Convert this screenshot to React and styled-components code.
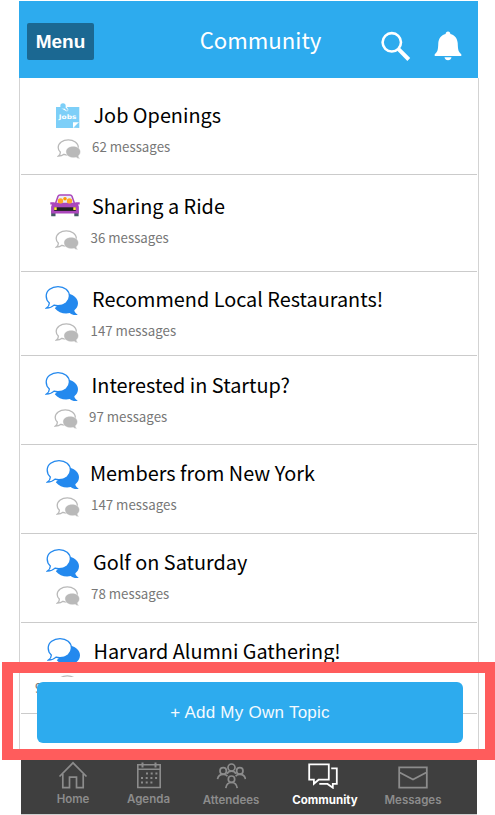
import styled, { createGlobalStyle } from "styled-components";

const App = () => {
    return (
        <PAGE>
            <GlobalStyle />
            <PHONE>
                <HEADER>
                    <MENU_BUTTON>Menu</MENU_BUTTON>
                    <HEADER_TITLE>Community</HEADER_TITLE>
                    <HEADER_ACTIONS>
                        <SearchIcon />
                        <BellIcon />
                    </HEADER_ACTIONS>
                </HEADER>
                <TOPIC_LIST>
                    {topics.map((topic) => (
                        <Topic key={topic.title} {...topic} />
                    ))}
                </TOPIC_LIST>
                <TAB_BAR>
                    {tabs.map(({ label, width, Icon, active, drop }) => (
                        <TAB key={label} $width={width} $active={active}>
                            <TAB_ICON $active={active}><Icon /></TAB_ICON>
                            <TAB_LABEL $drop={drop}>{label}</TAB_LABEL>
                        </TAB>
                    ))}
                </TAB_BAR>
            </PHONE>
            <HIGHLIGHT>
                <ADD_BUTTON>+ Add My Own Topic</ADD_BUTTON>
            </HIGHLIGHT>
        </PAGE>
    )
}

export default App;

const Topic = ({ title, messages, height, top, icon, iconX, bubbleX, titleX, messageX, cut }) => (
    <TOPIC_ROW $height={height} $top={top}>
        <TITLE_LINE>
            <ICON_SLOT $x={iconX}>
                {icon === "jobs" && <JobsIcon />}
                {icon === "car" && <CarIcon />}
                {icon === "chat" && <ChatIcon />}
            </ICON_SLOT>
            <TOPIC_TITLE $x={titleX}>{title}</TOPIC_TITLE>
        </TITLE_LINE>
        <MESSAGE_LINE $cut={cut}>
            <ICON_SLOT $x={bubbleX}><SmallChatIcon /></ICON_SLOT>
            {messages && <MESSAGE_COUNT $x={messageX}>{messages} messages</MESSAGE_COUNT>}
        </MESSAGE_LINE>
        {cut && <HIDDEN_COUNT>97 messages</HIDDEN_COUNT>}
    </TOPIC_ROW>
)

/* icons */

const SearchIcon = () => (
    <svg width="30" height="31" viewBox="0 0 30 31" fill="none" stroke="#fff">
        <circle cx="10.8" cy="11.3" r="9.2" strokeWidth="2.6" />
        <path d="M17.5 18.2 L27.8 28.5" strokeWidth="4" />
    </svg>
)

const BellIcon = () => (
    <svg width="28" height="30" viewBox="0 0 28 30" fill="#fff">
        <path d="M14 0.5c1.4 0 2.4 1 2.4 2.4 4.6 1.2 7 4.4 7.3 9.2.3 6.600.4 8.800 3.600 11.200v1.800H.7v-1.800c3.200-2.400 3.300-4.600 3.600-11.200.3-4.800 2.700-8 7.300-9.200C11.600 1.500 12.600.5 14 .5z" />
        <path d="M10.500 26.300h7c-.4 1.800-1.600 2.900-3.500 2.900s-3.100-1.100-3.500-2.900z" />
    </svg>
)

const JobsIcon = () => (
    <svg width="24" height="26" viewBox="0 0 24 26">
        <path d="M0 4h23.300v14.500L17 25H0z" fill="#7dcff8" />
        <path d="M17 25v-5.800h6z" fill="#fff" />
        <path d="M17.600 24.700L23.300 18.700V25z" fill="#7dcff8" />
        <path d="M5.500 5.500l4.500-3 2.500 4.500-1.500 1.500z" fill="#fff" />
        <circle cx="7" cy="3" r="2.700" fill="#7dcff8" />
        <path d="M8.500 4.500l3 3" stroke="#7dcff8" strokeWidth="1.600" />
        <text x="11.600" y="16" textAnchor="middle" textLength="17.500" lengthAdjust="spacingAndGlyphs" fontFamily="DejaVu Sans, sans-serif" fontSize="6.200" fontWeight="bold" fill="#fff">Jobs</text>
    </svg>
)

const CarIcon = () => (
    <svg width="30" height="26" viewBox="0 0 30 26">
        <path d="M1.200 17h4.300v5.300H1.200zM24.300 17h4.300v5.300h-4.300z" fill="#455a64" />
        <path d="M5.500 9.500L8 2.300Q8.500 1 10 1h10q1.500 0 2 1.300l2.500 7.200z" fill="#e8eefa" stroke="#ab47bc" strokeWidth="1.500" />
        <circle cx="10.500" cy="7" r="2.700" fill="#ffa726" />
        <circle cx="19.500" cy="7" r="2.700" fill="#ffa726" />
        <circle cx="15" cy="4.800" r="1.800" fill="#ff9800" />
        <path d="M.3 8.300h4.200l1 1.400h19l1-1.400h4.200v2.200h-1.600l.8 2.200V19.500H1.100v-6.800l.8-2.200H.3z" fill="#ab47bc" />
        <path d="M4.200 13.300h21.600v3.600H4.200z" fill="#212121" />
        <path d="M4.200 13.300h2.500v2.600H4.200zM23.300 13.300h2.500v2.600h-2.500z" fill="#ffeb3b" />
    </svg>
)

const ChatIcon = () => (
    <svg width="34" height="31" viewBox="0 0 34 31">
        <path d="M23.500 8.500C29 10 33 13.500 33 18.200c0 3-1.400 5.300-3.700 7 .3 2 1.500 3.300 3.500 4.600-3 .6-5.800.2-8-1.800-5.500 1.200-11.500-.3-15-4.800z" fill="#2489ee" />
        <path d="M13 1.600c6.500 0 11.400 4 11.400 9.500S19.500 20.600 13 20.600c-1.400 0-2.700-.1-3.900-.5-1.800 1.800-4.300 2.900-7.700 2.900 2.100-1.400 3-3 2.900-5.100C2.200 16.200 1.200 13.800 1.200 11.100 1.200 5.600 6.500 1.600 13 1.600z" fill="#fff" stroke="#2489ee" strokeWidth="1.300" />
    </svg>
)

const SmallChatIcon = () => (
    <svg width="24" height="20" viewBox="0 0 24 20">
        <path d="M11.300.8c5.400 0 10 3.100 10 7.700 0 4.400-4.500 7.500-10 7.500-1.600 0-3-.2-4.300-.7-1.500 1.200-3.300 1.800-5.600 1.800 1.500-1 2-2.400 1.900-4C1.900 11.800 1.200 10.300 1.200 8.500 1.200 3.900 5.900.8 11.300.8z" fill="#fff" stroke="#b9b9b9" strokeWidth="1.300" />
        <path d="M16.300 7.200c4 0 7.200 2.300 7.200 5.600 0 1.600-.7 3-1.900 4 0 1.200.5 2.200 1.500 3-1.700 0-2.900-.4-3.900-1.300-.9.200-1.800.3-2.800.3-4.200 0-7.500-2.500-7.500-6S12.200 7.200 16.300 7.200z" fill="#b9b9b9" stroke="#fff" strokeWidth=".5" />
    </svg>
)

const HomeIcon = () => (
    <svg width="30" height="28" viewBox="0 0 30 28" fill="none" stroke="currentColor" strokeWidth="1.700">
        <path d="M1.500 15.500L15 1.800l13.500 13.700M4.800 13v13.600h6.700V16.200h7v10.400h6.700V13" />
    </svg>
)

const AgendaIcon = () => (
    <svg width="26" height="28" viewBox="0 0 26 28" fill="none" stroke="currentColor">
        <path d="M1.800 3.800h22.400v22.700H1.800zM1.800 8.300h22.400" strokeWidth="1.600" />
        <path d="M6.500 1.500v5M19.500 1.500v5" strokeWidth="2" />
        <path d="M10 12.500h12M5 17h17M5 21.500h12" strokeWidth="2" strokeDasharray="2 2.700" />
    </svg>
)

const AttendeesIcon = () => (
    <svg width="30" height="28" viewBox="0 0 30 28" fill="none" stroke="currentColor" strokeWidth="1.700">
        <circle cx="15.500" cy="6.500" r="3.500" />
        <circle cx="7.200" cy="9.900" r="3.200" />
        <circle cx="23.800" cy="9.900" r="3.200" />
        <circle cx="15.500" cy="18.200" r="3.200" />
        <path d="M1.500 18.100c.6-3 2.600-4.700 5.700-4.700 2 0 3.300.6 4.200 1.800M11 12.800c1-1.800 2.500-2.600 4.500-2.600s3.500.8 4.500 2.600M29.500 18.100c-.6-3-2.600-4.700-5.700-4.700-2 0-3.300.6-4.200 1.800M9.800 27.200c.5-3.700 2.500-5.700 5.700-5.700s5.200 2 5.700 5.700" />
    </svg>
)

const CommunityIcon = () => (
    <svg width="30" height="28" viewBox="0 0 30 28" fill="none" stroke="currentColor" strokeWidth="1.800">
        <path d="M1.200 3.400h19.600v15.300H10.600l-4.700 4v-4H1.200z" />
        <path d="M23.200 7.400h5.600v15.500h-4v3.800l-5.300-3.800h-8.200" />
    </svg>
)

const MessagesIcon = () => (
    <svg width="30" height="28" viewBox="0 0 30 28" fill="none" stroke="currentColor" strokeWidth="1.800">
        <path d="M1.200 6.400h27.600v20.300H1.200zM1.200 11.300L15 18.600l13.800-7.300" />
    </svg>
)

/* data */

const topics = [
    { title: "Job Openings", messages: 62, height: 97, top: 22, icon: "jobs", iconX: 36, bubbleX: 37, titleX: 73, messageX: 71 },
    { title: "Sharing a Ride", messages: 36, height: 97, top: 16, icon: "car", iconX: 30, bubbleX: 35, titleX: 71.5, messageX: 69.5 },
    { title: "Recommend Local Restaurants!", messages: 147, height: 84, top: 12, icon: "chat", iconX: 25, bubbleX: 35, titleX: 71.5, messageX: 69.5 },
    { title: "Interested in Startup?", messages: 97, height: 89, top: 14, icon: "chat", iconX: 24.5, bubbleX: 34, titleX: 71, messageX: 68 },
    { title: "Members from New York", messages: 147, height: 89, top: 13, icon: "chat", iconX: 26, bubbleX: 35.5, titleX: 69.5, messageX: 70 },
    { title: "Golf on Saturday", messages: 78, height: 89, top: 13, icon: "chat", iconX: 26, bubbleX: 35.5, titleX: 72.5, messageX: 70 },
    { title: "Harvard Alumni Gathering!", height: 91, top: 13, icon: "chat", iconX: 26.5, bubbleX: 35.5, titleX: 73, cut: true },
]

const tabs = [
    { label: "Home", width: 74, Icon: HomeIcon },
    { label: "Agenda", width: 77, Icon: AgendaIcon },
    { label: "Attendees", width: 88, Icon: AttendeesIcon, drop: 1 },
    { label: "Community", width: 100, Icon: CommunityIcon, active: true, drop: 1 },
    { label: "Messages", width: 76, Icon: MessagesIcon, drop: 1 },
]

/* styles */

const GlobalStyle = createGlobalStyle`
    body {
        margin: 0;
        background: #fff;
        overflow: hidden;
    }
    * {
        box-sizing: border-box;
    }
    svg {
        display: block;
        flex: none;
    }
`

const humanist = `"Noto Sans CJK SC", "Noto Sans", sans-serif`

const PAGE = styled.div`
    position: relative;
    width: 495px;
    height: 815px;
    padding: 1px 0 0 19px;
    overflow: hidden;
`

const PHONE = styled.div`
    width: 460px;
    height: 814px;
    display: flex;
    flex-direction: column;
`

const HEADER = styled.header`
    height: 77px;
    width: 459px;
    flex: none;
    padding: 0 16px 0 8px;
    display: grid;
    grid-template-columns: 67px 1fr 81px;
    align-items: center;
    background: #2dabee;
`

const MENU_BUTTON = styled.button`
    width: 67px;
    height: 37px;
    margin-top: 4px;
    padding: 1px 0 0;
    border: 0;
    border-radius: 2px;
    background: #1b6892;
    color: #fff;
    font: bold 19px "Liberation Sans", Arial, sans-serif;
`

const HEADER_TITLE = styled.h1`
    margin: 0 0 1px 46px;
    text-align: center;
    color: #fff;
    font: 400 22.2px/30px ${humanist};
`

const HEADER_ACTIONS = styled.div`
    display: flex;
    justify-content: space-between;
    margin-top: 13px;
`

const TOPIC_LIST = styled.main`
    flex: 1;
    overflow: hidden;
    border: solid #d3d3d3;
    border-width: 0 1px;
    padding: 0 1px;
`

const TOPIC_ROW = styled.section`
    height: ${(p) => p.$height}px;
    padding-top: ${(p) => p.$top}px;
    border-bottom: 1px solid #cbcbcb;
`

const TITLE_LINE = styled.div`
    height: 32px;
    display: grid;
    grid-template-columns: 0 1fr;
    align-items: center;
`

const ICON_SLOT = styled.div`
    padding-left: ${(p) => p.$x - 1}px;
`

const TOPIC_TITLE = styled.h2`
    margin: -3px 0 0;
    padding-left: ${(p) => p.$x - 0.5}px;
    color: #000;
    font: 400 19.85px/32px ${humanist};
    white-space: nowrap;
`

const MESSAGE_LINE = styled.div`
    height: ${(p) => (p.$cut ? 9 : 32)}px;
    padding-top: ${(p) => (p.$cut ? 7 : 2)}px;
    display: grid;
    grid-template-columns: 0 1fr;
    align-items: ${(p) => (p.$cut ? "start" : "center")};
    overflow: hidden;
`

const MESSAGE_COUNT = styled.p`
    margin: -5px 0 0;
    padding-left: ${(p) => p.$x}px;
    color: #777;
    font: 400 13.3px/20px ${humanist};
    white-space: nowrap;
`

const HIDDEN_COUNT = styled(MESSAGE_COUNT)`
    margin: 1px 0 0;
    padding-left: 14px;
`

const TAB_BAR = styled.nav`
    height: 55px;
    flex: none;
    width: 456px;
    margin: 0 0 0 2px;
    padding: 0 0 0 15px;
    display: flex;
    background: #3f3f3f;
    border-bottom: 1px solid #cfcfcf;
`

const TAB = styled.div`
    width: ${(p) => p.$width}px;
    display: flex;
    flex-direction: column;
    align-items: center;
    color: ${(p) => (p.$active ? "#fff" : "#8c8c8c")};
    font-weight: ${(p) => (p.$active ? 700 : 600)};
`

const TAB_ICON = styled.div`
    height: 30px;
    padding-top: 1px;
    padding-right: ${(p) => (p.$active ? 4 : 0)}px;
`

const TAB_LABEL = styled.span`
    margin-top: ${(p) => 1 + (p.$drop || 0)}px;
    font-family: Inter, "Liberation Sans", sans-serif;
    font-size: 11.5px;
    line-height: 16px;
`

/* callout frame drawn over the bottom of the list */
const HIGHLIGHT = styled.div`
    position: absolute;
    left: 2px;
    top: 662px;
    width: 494px;
    height: 98px;
    border: 11px solid #ff5c5c;
    padding: 9px 22px 0 24px;
`

const ADD_BUTTON = styled.button`
    width: 426px;
    height: 61px;
    padding: 1px 0 0;
    border: 0;
    border-radius: 6px;
    background: #2dabee;
    color: #f4fafe;
    font: 400 17px "Liberation Sans", Arial, sans-serif;
    letter-spacing: 0.25px;
`
